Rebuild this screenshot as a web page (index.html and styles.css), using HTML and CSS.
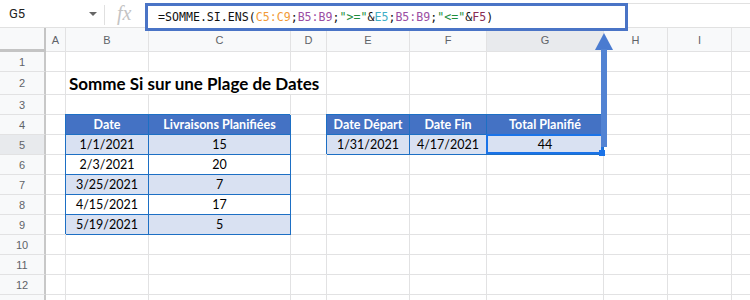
FILE: index.html
```html
<!DOCTYPE html>
<html lang="fr">
<head>
    <meta charset="UTF-8">
    <meta name="viewport" content="width=device-width, initial-scale=1.0">
    <title>Somme Si sur une Plage de Dates</title>
    <link rel="stylesheet" href="styles.css">
</head>
<body>
<div class="page">
    <div class="toolbar">
        <div class="name-box">
            <span class="cell-ref">G5</span>
            <span class="caret"></span>
        </div>
        <div class="sep"></div>
        <div class="fx">fx</div>
        <div class="formula-wrap">
            <div class="formula">=SOMME.SI.ENS(<span class="r1">C5:C9</span>;<span class="r2">B5:B9</span>;<span class="str">"&gt;="</span>&amp;<span class="r3">E5</span>;<span class="r2">B5:B9</span>;<span class="str">"&lt;="</span>&amp;<span class="r4">F5</span>)</div>
        </div>
    </div>

    <div class="sheet">
        <table class="grid">
            <colgroup>
                <col class="w-rh"><col class="w-a"><col class="w-b"><col class="w-c"><col class="w-d">
                <col class="w-e"><col class="w-f"><col class="w-g"><col class="w-h"><col class="w-i"><col class="w-j">
            </colgroup>
            <thead>
                <tr>
                    <th class="corner"></th>
                    <th>A</th><th>B</th><th>C</th><th>D</th><th>E</th><th>F</th>
                    <th class="on">G</th><th>H</th><th>I</th><th></th>
                </tr>
            </thead>
            <tbody>
                <tr><th>1</th><td></td><td></td><td></td><td></td><td></td><td></td><td></td><td></td><td></td><td></td></tr>
                <tr class="tall">
                    <th>2</th><td></td>
                    <td colspan="3" class="title">Somme Si sur une Plage de Dates</td>
                    <td></td><td></td><td></td><td></td><td></td><td></td>
                </tr>
                <tr><th>3</th><td></td><td></td><td></td><td></td><td></td><td></td><td></td><td></td><td></td><td></td></tr>
                <tr>
                    <th>4</th><td></td>
                    <td class="t hd">Date</td><td class="t hd">Livraisons Planifiées</td>
                    <td></td>
                    <td class="t hd">Date Départ</td><td class="t hd">Date Fin</td><td class="t hd">Total Planifié</td>
                    <td></td><td></td><td></td>
                </tr>
                <tr>
                    <th class="on">5</th><td></td>
                    <td class="t alt">1/1/2021</td><td class="t alt">15</td>
                    <td></td>
                    <td class="t alt">1/31/2021</td><td class="t alt">4/17/2021</td>
                    <td class="t alt pick">44<span class="sel-box"></span><span class="handle"></span></td>
                    <td></td><td></td><td></td>
                </tr>
                <tr>
                    <th>6</th><td></td>
                    <td class="t">2/3/2021</td><td class="t">20</td>
                    <td></td><td></td><td></td><td></td><td></td><td></td><td></td>
                </tr>
                <tr>
                    <th>7</th><td></td>
                    <td class="t alt">3/25/2021</td><td class="t alt">7</td>
                    <td></td><td></td><td></td><td></td><td></td><td></td><td></td>
                </tr>
                <tr>
                    <th>8</th><td></td>
                    <td class="t">4/15/2021</td><td class="t">17</td>
                    <td></td><td></td><td></td><td></td><td></td><td></td><td></td>
                </tr>
                <tr>
                    <th>9</th><td></td>
                    <td class="t alt">5/19/2021</td><td class="t alt">5</td>
                    <td></td><td></td><td></td><td></td><td></td><td></td><td></td>
                </tr>
                <tr><th>10</th><td></td><td></td><td></td><td></td><td></td><td></td><td></td><td></td><td></td><td></td></tr>
                <tr><th>11</th><td></td><td></td><td></td><td></td><td></td><td></td><td></td><td></td><td></td><td></td></tr>
                <tr><th>12</th><td></td><td></td><td></td><td></td><td></td><td></td><td></td><td></td><td></td><td></td></tr>
                <tr><th></th><td></td><td></td><td></td><td></td><td></td><td></td><td></td><td></td><td></td><td></td></tr>
            </tbody>
        </table>
    </div>

    <!-- annotation arrow pointing at the formula -->
    <svg class="arrow" width="20" height="120" viewBox="0 0 20 120">
        <polygon points="10,2 19,19 1,19" fill="#4a7bd0"/>
        <rect x="7" y="18" width="6" height="98" fill="#5283d3"/>
    </svg>
</div>
</body>
</html>
```

FILE: styles.css
```css
html, body {
    margin: 0;
    overflow: hidden;
    background-color: #fff;
}
body {
    font-family: Lato, "Liberation Sans", sans-serif;
    color: #000;
}
.page {
    position: relative;
}

/* formula bar */
.toolbar {
    display: flex;
    height: 27px;
    border-bottom: 1px solid #e1e1e1;
}
.name-box {
    display: flex;
    align-items: center;
    width: 104px;
    box-sizing: border-box;
    padding-left: 9px;
}
.cell-ref {
    flex: 1;
    font-family: Roboto, sans-serif;
    font-size: 13px;
    color: #222;
}
.caret {
    border-top: 4px solid #666;
    border-left: 4px solid transparent;
    border-right: 4px solid transparent;
    margin-right: 7px;
}
.sep {
    width: 1px;
    height: 20px;
    margin-top: 5px;
    background-color: #e0e0e0;
}
.fx {
    width: 40px;
    box-sizing: border-box;
    padding-left: 12px;
    font-family: "Liberation Serif", serif;
    font-style: italic;
    font-size: 20px;
    line-height: 27px;
    color: #c4c4c4;
}
.formula-wrap {
    flex: 1;
    margin-top: 3px;
    border-top: 1px solid #e1e1e1;
}
.formula {
    position: relative;
    z-index: 2;
    width: 467px;
    height: 22px;
    margin-top: -1px;
    padding-left: 10px;
    box-sizing: content-box;
    border: 3px solid #4a74c6;
    background-color: #fff;
    font-family: "DejaVu Sans Mono", monospace;
    font-size: 11.6px;
    line-height: 22px;
    color: #111;
    white-space: nowrap;
}
.formula .r1 { color: #f29a38; }
.formula .r2 { color: #9b4ea3; }
.formula .r3 { color: #3eaec6; }
.formula .r4 { color: #8a2d52; }
.formula .str { color: #1e8e3e; }

/* grid */
.sheet {
    overflow: hidden;
}
.grid {
    border-collapse: separate;
    border-spacing: 0;
    table-layout: fixed;
    width: 832px;
}
.w-rh { width: 46px; }
.w-a { width: 20px; }
.w-b { width: 83px; }
.w-c { width: 142px; }
.w-d { width: 36px; }
.w-e { width: 83px; }
.w-f { width: 77px; }
.w-g { width: 117px; }
.w-h { width: 64px; }
.w-i { width: 64px; }
.w-j { width: 100px; }

.grid th, .grid td {
    height: 20px;
    padding: 0;
    box-sizing: border-box;
    border-right: 1px solid #e2e2e3;
    border-bottom: 1px solid #e2e2e3;
    text-align: center;
    white-space: nowrap;
    font-size: 12.5px;
    line-height: 18px;
}
.grid th {
    background-color: #f8f9fa;
    font-family: "Liberation Sans", Arial, sans-serif;
    font-size: 11px;
    font-weight: normal;
    color: #5f6368;
}
.grid thead th {
    height: 24px;
}
.grid tbody th {
    border-right: 2px solid #c8c8c8;
}
.grid .corner {
    border-right: 2px solid #c4c4c4;
    border-bottom: 3px solid #c4c4c4;
}
.grid th.on {
    background-color: #e8eaed;
}
.grid tr.tall td, .grid tr.tall th {
    height: 23px;
}
.grid .title {
    text-align: left;
    padding-left: 3px;
    font-size: 17px;
    font-weight: 700;
    line-height: 21px;
}

/* formatted tables */
.grid .t {
    border-right-color: #1d6fc4;
    border-bottom-color: #1d6fc4;
    box-shadow: -1px -1px 0 #1d6fc4;
}
.grid .hd {
    background-color: #4472c4;
    color: #fff;
    font-size: 12.5px;
    font-weight: 700;
}
.grid .alt {
    background-color: #d9e1f2;
}

/* selected cell */
.grid .pick {
    position: relative;
}
.sel-box {
    position: absolute;
    top: -1px;
    left: -1px;
    right: 0;
    bottom: 0;
    border: 2px solid #1a73e8;
}
.handle {
    position: absolute;
    right: -2px;
    bottom: -2px;
    width: 6px;
    height: 6px;
    background-color: #1a73e8;
}

.arrow {
    position: absolute;
    left: 594px;
    top: 31px;
    z-index: 3;
}
```
